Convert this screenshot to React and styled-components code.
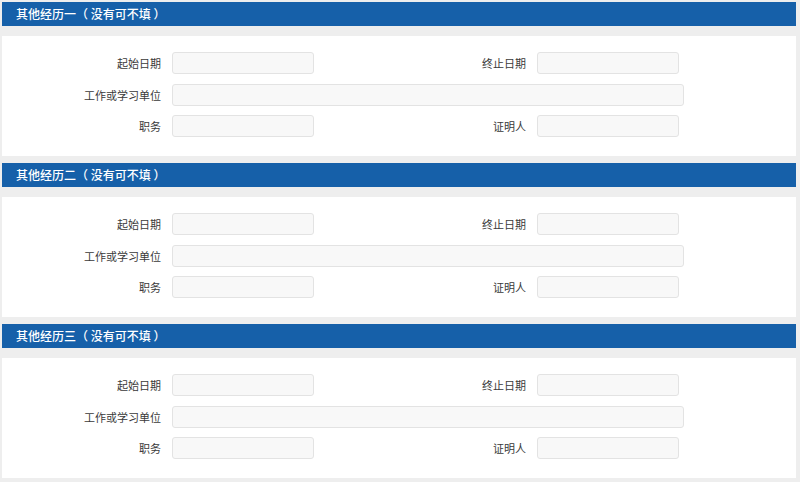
import React from "react";
import styled, { createGlobalStyle } from "styled-components";

const GlobalStyle = createGlobalStyle`
  html, body {
    margin: 0;
    padding: 0;
    background: #eeeeee;
    font-family: "Noto Sans CJK SC", "Microsoft YaHei", sans-serif;
  }
`;

const sections = ["其他经历一（ 没有可不填 ）", "其他经历二（ 没有可不填 ）", "其他经历三（ 没有可不填 ）"];

export default function App() {
  return (
    <Page>
      <GlobalStyle />
      {sections.map((title) => (
        <Section key={title}>
          <SectionHeader>{title}</SectionHeader>
          <Panel>
            <FormGrid>
              <Label>起始日期</Label>
              <Input />
              <Label>终止日期</Label>
              <Input />
              <Label>工作或学习单位</Label>
              <Input wide />
              <Label>职务</Label>
              <Input />
              <Label>证明人</Label>
              <Input />
            </FormGrid>
          </Panel>
        </Section>
      ))}
    </Page>
  );
}

const Page = styled.div`
  width: 794px;
  padding: 2px 4px 0 2px;
  display: flex;
  flex-direction: column;
  gap: 7px;
`;

const Section = styled.div`
  display: flex;
  flex-direction: column;
  gap: 10px;
`;

const SectionHeader = styled.div`
  height: 24px;
  line-height: 23px;
  background: #1660a9;
  color: #ffffff;
  font-size: 12px;
  font-weight: 500;
  padding-left: 14px;
`;

const Panel = styled.div`
  background: #ffffff;
  padding: 16px 0 19px;
`;

const FormGrid = styled.div`
  display: grid;
  grid-template-columns: 159px 142px 201px 142px;
  grid-auto-rows: 22px;
  column-gap: 11px;
  row-gap: 9.5px;
  align-items: center;
`;

const Label = styled.label`
  text-align: right;
  font-size: 11px;
  line-height: 22px;
  color: #3a3a3a;
`;

const Input = styled.input`
  box-sizing: border-box;
  height: 22px;
  width: ${(p) => (p.wide ? "512px" : "142px")};
  grid-column: ${(p) => (p.wide ? "2 / span 3" : "auto")};
  background: #f8f8f8;
  border: 1px solid #e3e3e3;
  border-radius: 3px;
  outline: none;
  padding: 0 6px;
`;
